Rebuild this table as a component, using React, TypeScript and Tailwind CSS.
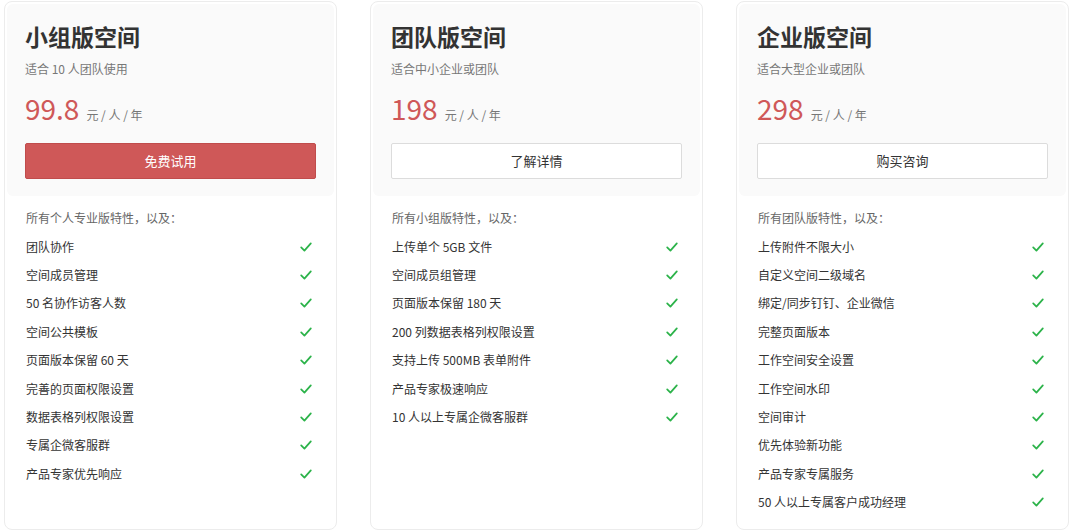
import React from "react";

type Plan = {
  name: string;
  desc: string;
  price: string;
  action: string;
  primary?: boolean;
  intro: string;
  features: string[];
};

const plans: Plan[] = [
  {
    name: "小组版空间",
    desc: "适合 10 人团队使用",
    price: "99.8",
    action: "免费试用",
    primary: true,
    intro: "所有个人专业版特性，以及：",
    features: [
      "团队协作",
      "空间成员管理",
      "50 名协作访客人数",
      "空间公共模板",
      "页面版本保留 60 天",
      "完善的页面权限设置",
      "数据表格列权限设置",
      "专属企微客服群",
      "产品专家优先响应",
    ],
  },
  {
    name: "团队版空间",
    desc: "适合中小企业或团队",
    price: "198",
    action: "了解详情",
    intro: "所有小组版特性，以及：",
    features: [
      "上传单个 5GB 文件",
      "空间成员组管理",
      "页面版本保留 180 天",
      "200 列数据表格列权限设置",
      "支持上传 500MB 表单附件",
      "产品专家极速响应",
      "10 人以上专属企微客服群",
    ],
  },
  {
    name: "企业版空间",
    desc: "适合大型企业或团队",
    price: "298",
    action: "购买咨询",
    intro: "所有团队版特性，以及：",
    features: [
      "上传附件不限大小",
      "自定义空间二级域名",
      "绑定/同步钉钉、企业微信",
      "完整页面版本",
      "工作空间安全设置",
      "工作空间水印",
      "空间审计",
      "优先体验新功能",
      "产品专家专属服务",
      "50 人以上专属客户成功经理",
    ],
  },
];

const Check = () => (
  <svg viewBox="0 0 16 16" className="w-[14px] h-[14px]" fill="none">
    <path d="M2.5 8.5 L6.2 12.2 L13.5 3.8" stroke="#2cb34a" strokeWidth="2" strokeLinecap="round" strokeLinejoin="round" />
  </svg>
);

const PlanCard = ({ plan }: { plan: Plan }) => {
  return (
    <div className="w-[333px] h-[529px] shrink-0 rounded-lg border border-[#ececec] bg-white p-[2px]">
      <div className="rounded-md bg-[#fafafa] px-[18px] pt-[17px] pb-[17px]">
        <div className="text-[23px] leading-[30px] font-bold text-[#333]">{plan.name}</div>
        <div className="mt-[9px] text-[12px] leading-[18px] text-[#777]">{plan.desc}</div>
        <div className="mt-[12px] flex items-baseline h-[36px]">
          <span className="text-[28px] leading-[36px] text-[#cf5858]">{plan.price}</span>
          <span className="ml-[7px] text-[12px] text-[#777]">元 / 人 / 年</span>
        </div>
        <button
          className={
            plan.primary
              ? "mt-[17px] w-full h-[36px] rounded-[2px] bg-[#cf5858] border border-[#c04c4c] text-white text-[13px]"
              : "mt-[17px] w-full h-[36px] rounded-[2px] bg-white border border-[#dcdcdc] text-[#333] text-[13px]"
          }
        >
          {plan.action}
        </button>
      </div>
      <div className="pl-[19px] pr-[21px] pt-[8px]">
        <div className="h-[28.4px] flex items-center text-[12px] text-[#666]">{plan.intro}</div>
        {plan.features.map((f) => (
          <div key={f} className="h-[28.4px] flex items-center justify-between text-[12px] text-[#333]">
            <span>{f}</span>
            <Check />
          </div>
        ))}
      </div>
    </div>
  );
};

export default function App() {
  return (
    <div
      className="flex gap-[33px] pl-[4px] pt-[1px] bg-white w-[1073px] h-[531px] overflow-hidden"
      style={{ fontFamily: '"Noto Sans CJK SC", "Noto Sans", sans-serif' }}
    >
      {plans.map((p) => (
        <PlanCard key={p.name} plan={p} />
      ))}
    </div>
  );
}
